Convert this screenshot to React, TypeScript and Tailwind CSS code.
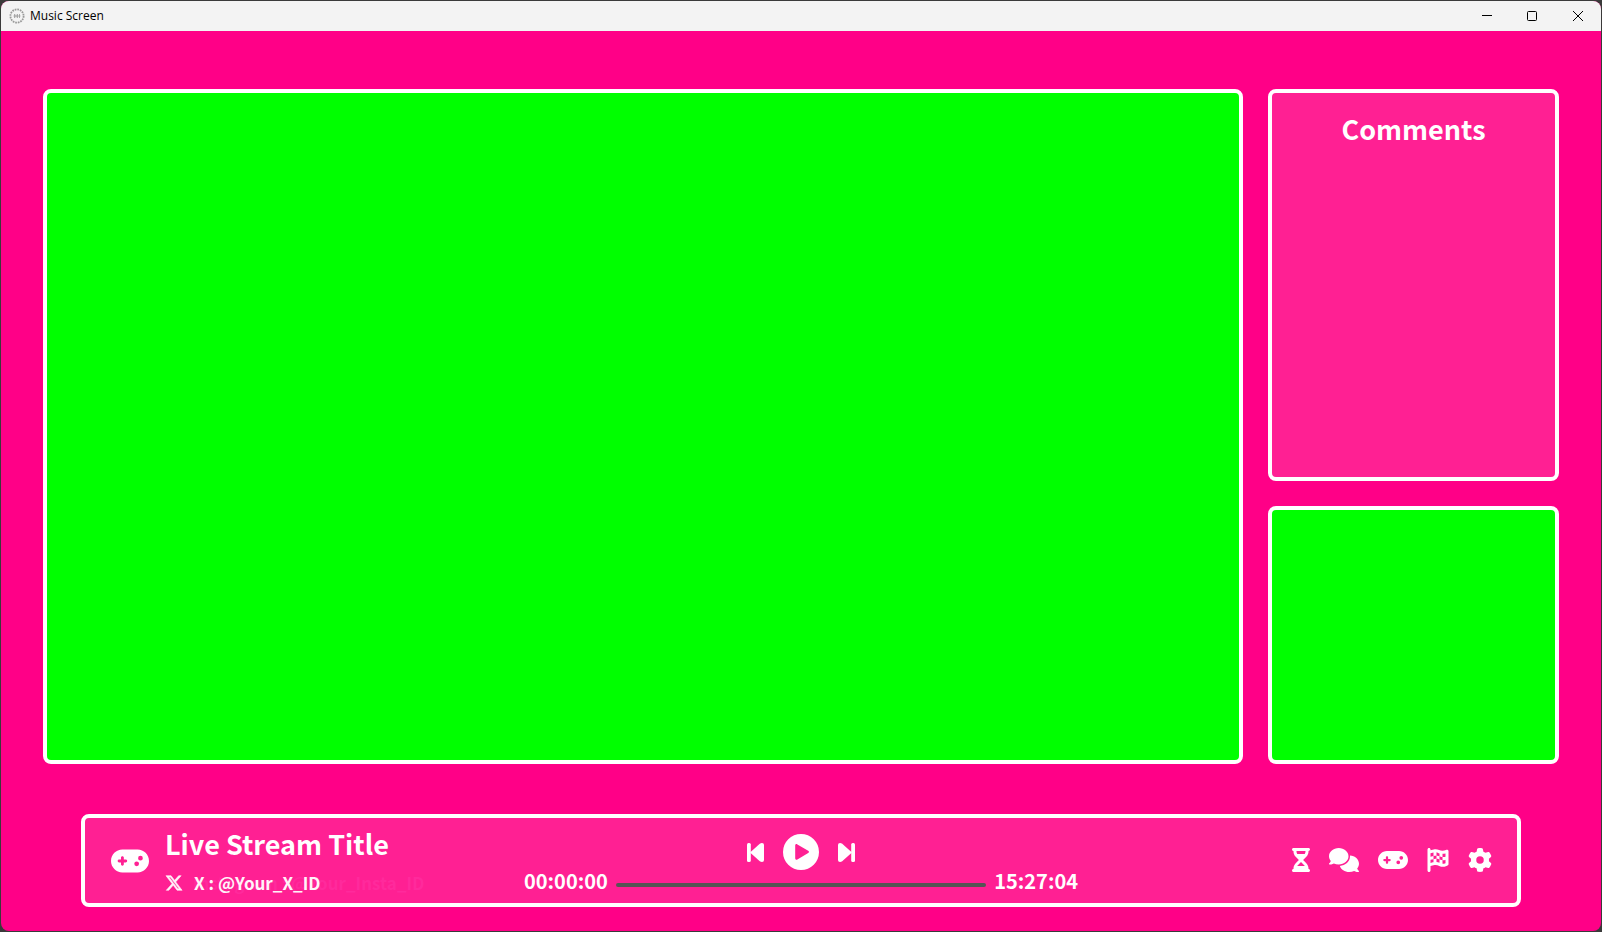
import React from 'react';
import {
  FaComments,
  FaFlagCheckered,
  FaGamepad,
  FaGear,
  FaHourglassHalf,
  FaXTwitter,
} from 'react-icons/fa6';

const scenes = [
  { id: 'waiting', label: 'Waiting screen', icon: FaHourglassHalf, size: 'w-[18px]' },
  { id: 'chat', label: 'Chat screen', icon: FaComments, size: 'w-[30px]' },
  { id: 'game', label: 'Game screen', icon: FaGamepad, size: 'w-[30px]' },
  { id: 'ending', label: 'Ending screen', icon: FaFlagCheckered, size: 'w-[22px]' },
  { id: 'settings', label: 'Settings', icon: FaGear, size: 'w-6' },
];

const AppIcon: React.FC = () => (
  <svg viewBox="0 0 16 16" className="h-4 w-4" fill="none" stroke="#9a9a9a">
    <circle cx="8" cy="8" r="6.6" strokeWidth="1.8" strokeDasharray="1.7 0.9" />
    <path d="M5.5 6v4M7 6.5v3M8.5 6v4M10.5 6v4M4.5 8h7" strokeWidth="0.8" />
  </svg>
);

// Mirrored for the "next" button
const StepIcon: React.FC<{ className?: string }> = ({ className = '' }) => (
  <svg viewBox="0 0 17 19" className={`h-[19px] w-[17px] ${className}`} fill="currentColor">
    <rect width="3.8" height="19" rx="1.5" />
    <path d="M3 9.5L12.8.8Q13.8 0 15 0Q17 0 17 2V17Q17 19 15 19Q13.8 19 12.8 18.2Z" />
  </svg>
);

const PlayIcon: React.FC = () => (
  <svg viewBox="0 0 36 36" className="h-9 w-9" fill="currentColor">
    <path
      fillRule="evenodd"
      d="M18 0a18 18 0 1 1 0 36a18 18 0 1 1 0-36zM14.4 10.4C13.3 9.7 12.2 10.3 12.2 11.6V24.2C12.2 25.5 13.3 26.1 14.4 25.4L25.2 19C26.2 18.4 26.2 17.4 25.2 16.8Z"
    />
  </svg>
);

const TitleBar: React.FC = () => (
  <header className="flex h-[30px] shrink-0 items-center justify-between bg-[#f3f3f3] pl-2 text-black">
    <div className="flex items-center gap-[5px]">
      <AppIcon />
      <h1 className="font-['Open_Sans',sans-serif] text-xs">Music Screen</h1>
    </div>
    <div className="flex h-full">
      <button type="button" aria-label="Minimize" className="flex w-[45px] items-center justify-center">
        <svg viewBox="0 0 10 10" className="h-[10px] w-[10px]" stroke="currentColor">
          <path d="M0 4.5h10" />
        </svg>
      </button>
      <button type="button" aria-label="Maximize" className="flex w-[45px] items-center justify-center">
        <svg viewBox="0 0 10 10" className="h-[10px] w-[10px]" fill="none" stroke="currentColor">
          <rect x="0.5" y="0.5" width="9" height="9" rx="1" />
        </svg>
      </button>
      <button type="button" aria-label="Close" className="flex w-[47px] items-center justify-center">
        <svg viewBox="0 0 10 10" className="h-[10px] w-[10px]" stroke="currentColor">
          <path d="M0 0l10 10M10 0L0 10" />
        </svg>
      </button>
    </div>
  </header>
);

const StreamInfo: React.FC = () => (
  <div className="flex items-center gap-4 pl-[26px]">
    <FaGamepad className="h-[38px] w-[38px]" />
    <div className="pt-1">
      <h2 className="text-[27px] leading-9 font-bold">Live Stream Title</h2>
      <div className="relative mt-[5px] h-8 text-[17px] leading-8 font-bold whitespace-nowrap">
        {/* account line that is fading out under the current one */}
        <p className="absolute left-7 text-[#ff2a9c]">Instagram : @Your_Insta_ID</p>
        <p className="relative flex items-center gap-[11px] opacity-95">
          <FaXTwitter className="h-[18px] w-[18px] stroke-16" />
          X : @Your_X_ID
        </p>
      </div>
    </div>
  </div>
);

const Player: React.FC = () => (
  <div className="flex w-[554px] flex-col items-center pt-[5px]">
    <div className="flex h-9 items-center gap-[19px]">
      <button type="button" aria-label="Previous track">
        <StepIcon />
      </button>
      <button type="button" aria-label="Play">
        <PlayIcon />
      </button>
      <button type="button" aria-label="Next track">
        <StepIcon className="-scale-x-100" />
      </button>
    </div>
    <div className="flex w-full items-center gap-2 text-xl leading-[22px] font-bold">
      <span>00:00:00</span>
      <input
        type="range"
        aria-label="Playback position"
        min={0}
        max={55624}
        defaultValue={0}
        className="mt-2 h-1 min-w-0 flex-1 appearance-none rounded-full bg-[#555555] [&::-webkit-slider-thumb]:h-0 [&::-webkit-slider-thumb]:w-0 [&::-webkit-slider-thumb]:appearance-none"
      />
      <span>15:27:04</span>
    </div>
  </div>
);

const SceneMenu: React.FC = () => (
  <nav className="flex items-center justify-end gap-[19px] pr-[25px] pb-0.5">
    {scenes.map(({ id, label, icon: Icon, size }) => (
      <button key={id} type="button" aria-label={label}>
        <Icon className={`h-6 ${size}`} />
      </button>
    ))}
  </nav>
);

const App: React.FC = () => (
  <div className="h-screen bg-[#3a3a3a] p-px font-['Noto_Sans_CJK_JP',sans-serif] text-white">
    <div className="flex h-full flex-col overflow-hidden rounded-lg bg-[#ff0087]">
      <TitleBar />
      <div className="flex flex-1 flex-col justify-between px-[42px] pt-[58px] pb-6">
        <main className="grid h-[675px] grid-cols-[1fr_291px] gap-[25px]">
          <section aria-label="Stream" className="rounded-lg border-4 border-white bg-[#00ff00]" />
          <div className="grid grid-rows-[1fr_258px] gap-[25px]">
            <section className="rounded-lg border-4 border-white bg-[#ff2093] pt-3">
              <h2 className="text-center text-[27px] leading-12 font-bold">Comments</h2>
            </section>
            <section aria-label="Camera" className="rounded-lg border-4 border-white bg-[#00ff00]" />
          </div>
        </main>
        <footer className="mx-[38px] grid h-[93px] grid-cols-[1fr_auto_1fr] items-center rounded-lg border-4 border-white bg-[#ff2093]">
          <StreamInfo />
          <Player />
          <SceneMenu />
        </footer>
      </div>
    </div>
  </div>
);

export default App;
